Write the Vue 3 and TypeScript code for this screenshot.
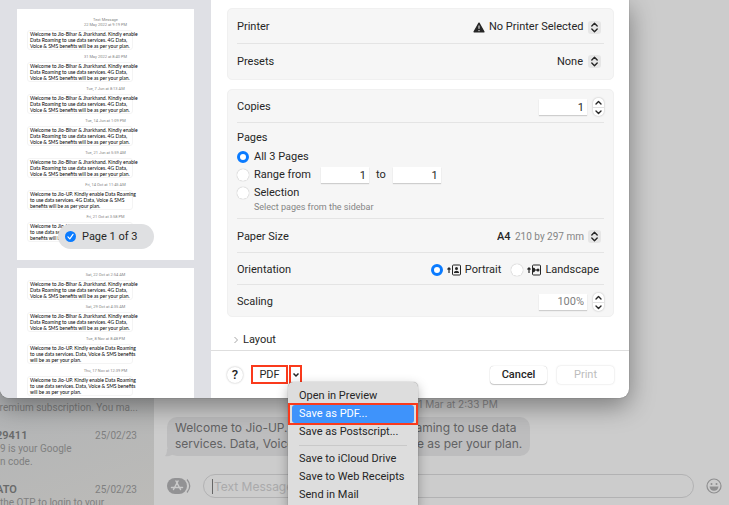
<script setup lang="ts">
import { ref } from 'vue'

interface Note {
  stamp: string
  body: string
}

const bihar = 'Welcome to Jio-Bihar & Jharkhand. Kindly enable\nData Roaming to use data services. 4G Data,\nVoice & SMS benefits will be as per your plan.'
const upRoaming = 'Welcome to Jio-UP. Kindly enable Data Roaming\nto use data services. 4G Data, Voice & SMS\nbenefits will be as per your plan.'
const upData = 'Welcome to Jio-UP. Kindly enable Data Roaming\nto use data services. Data, Voice & SMS benefits\nwill be as per your plan.'

const firstPage: Note[] = [
  { stamp: '22 May 2022 at 9:19 PM', body: bihar },
  { stamp: '31 May 2022 at 8:40 PM', body: bihar },
  { stamp: 'Tue, 7 Jun at 8:13 AM', body: bihar },
  { stamp: 'Tue, 14 Jun at 1:09 PM', body: bihar },
  { stamp: 'Tue, 21 Jun at 5:59 AM', body: bihar },
  { stamp: 'Fri, 14 Oct at 11:45 AM', body: upRoaming },
  { stamp: 'Fri, 21 Oct at 3:58 PM', body: upRoaming },
]
const secondPage: Note[] = [
  { stamp: 'Sat, 22 Oct at 2:54 AM', body: bihar },
  { stamp: 'Sat, 29 Oct at 4:35 AM', body: bihar },
  { stamp: 'Tue, 8 Nov at 8:48 PM', body: upData },
  { stamp: 'Thu, 17 Nov at 12:39 PM', body: upData },
]

const includePage = ref(true)
const copies = ref('1')
const from = ref('1')
const to = ref('1')
const scaling = ref('100%')
const range = ref('all')
const orientation = ref('portrait')
</script>

<template>
  <div class="stage">
    <div class="messages">
      <aside class="threads">
        <article class="thread">
          <p>premium subscription. You ma...</p>
        </article>
        <article class="thread">
          <header><b>29411</b><time>25/02/23</time></header>
          <p>9 is your Google<br />n code.</p>
        </article>
        <article class="thread">
          <header><b>ATO</b><time>25/02/23</time></header>
          <p>the OTP to login to your</p>
        </article>
      </aside>
      <main class="chat">
        <time class="chat-time">Wed, 1 Mar at 2:33 PM</time>
        <p class="bubble">
          Welcome to Jio-UP. Kindly enable Data Roaming to use data<br />services. Data, Voice &amp; SMS benefits will be as per your plan.
          <svg class="tail" width="10" height="8" viewBox="0 0 10 8"><path d="M2 0C2 4 1 6 0 7C4 8 7 6 10 4V0Z" fill="#bdbdbe" /></svg>
        </p>
        <form class="composer">
          <button type="button" class="plain" aria-label="Apps">
            <svg width="24" height="16" viewBox="0 0 24 16">
              <rect x="0" y="0" width="20" height="16" rx="8" fill="#929294" />
              <path d="M20 1.500Q25.500 8 20 14.500" fill="none" stroke="#929294" stroke-width="1.200" />
              <path d="M11 3L6.500 11.500M9 3L13.500 11.500M4.500 9.500H15.500" fill="none" stroke="#cacaca" stroke-width="1.500" stroke-linecap="round" />
            </svg>
          </button>
          <input class="compose-field" type="text" placeholder="Text Message" aria-label="Text Message" />
          <button type="button" class="plain" aria-label="Emoji">
            <svg width="16" height="16" viewBox="0 0 16 16">
              <circle cx="8" cy="8" r="7" fill="none" stroke="#8f8f90" stroke-width="1.200" />
              <circle cx="5.500" cy="6" r="1" fill="#8f8f90" /><circle cx="10.500" cy="6" r="1" fill="#8f8f90" />
              <path d="M3.500 8.500H12.500Q12 12.700 8 12.700T3.500 8.500Z" fill="#8f8f90" />
            </svg>
          </button>
        </form>
      </main>
    </div>

    <section class="dialog" role="dialog" aria-label="Printer">
      <aside class="preview">
        <div class="sheet sheet-first">
          <p class="stamp">Text Message</p>
          <template v-for="(n, i) in firstPage" :key="n.stamp">
            <p class="stamp" :class="{ gap: i > 0 }">{{ n.stamp }}</p>
            <p class="note">{{ n.body }}</p>
          </template>
          <label class="page-pill">
            <input v-model="includePage" type="checkbox" />
            <svg width="11" height="11" viewBox="0 0 11 11"><circle cx="5.500" cy="5.500" r="5.500" fill="#0a7bff" /><path d="M3 5.800L4.800 7.800L8 3.300" fill="none" stroke="#fff" stroke-width="1.200" stroke-linecap="round" stroke-linejoin="round" /></svg>
            Page 1 of 3
          </label>
        </div>
        <div class="sheet">
          <template v-for="n in secondPage" :key="n.stamp">
            <p class="stamp gap">{{ n.stamp }}</p>
            <p class="note">{{ n.body }}</p>
          </template>
        </div>
      </aside>

      <form class="settings" @submit.prevent>
        <div class="options">
          <div class="card">
            <div class="row">
              <label for="printer">Printer</label>
              <span class="pick">
                <svg width="12" height="11" viewBox="0 0 12 11"><path d="M6 1.200L10.900 9.800H1.100Z" fill="#262626" stroke="#262626" stroke-width="1.400" stroke-linejoin="round" /><path d="M6 3.500V6.800M6 8V9.200" stroke="#f6f6f6" stroke-width="1" /></svg>
                <select id="printer"><option>No Printer Selected</option></select>
                <svg class="updown" viewBox="0 0 13 13"><path d="M3.800 5L6.500 2.300L9.200 5M3.800 8L6.500 10.700L9.200 8" /></svg>
              </span>
            </div>
            <div class="row">
              <label for="presets">Presets</label>
              <span class="pick">
                <select id="presets"><option>None</option></select>
                <svg class="updown" viewBox="0 0 13 13"><path d="M3.800 5L6.500 2.300L9.200 5M3.800 8L6.500 10.700L9.200 8" /></svg>
              </span>
            </div>
          </div>

          <div class="card">
            <div class="row low">
              <label for="copies">Copies</label>
              <span class="stepped">
                <input id="copies" v-model="copies" class="field" type="text" />
                <span class="stepper">
                  <button type="button" aria-label="More copies"><svg viewBox="0 0 11 9"><path d="M3 6L5.500 3.500L8 6" /></svg></button>
                  <button type="button" aria-label="Fewer copies"><svg viewBox="0 0 11 9"><path d="M3 3L5.500 5.500L8 3" /></svg></button>
                </span>
              </span>
            </div>
            <fieldset class="pages">
              <legend>Pages</legend>
              <label class="choice"><input v-model="range" type="radio" name="range" value="all" />All 3 Pages</label>
              <div class="choice">
                <input id="r-from" v-model="range" type="radio" name="range" value="from" />
                <label for="r-from">Range from</label>
                <input v-model="from" class="field" type="text" aria-label="First page" />
                <label for="to">to</label>
                <input id="to" v-model="to" class="field" type="text" />
              </div>
              <label class="choice"><input v-model="range" type="radio" name="range" value="selection" />Selection</label>
              <p class="hint">Select pages from the sidebar</p>
            </fieldset>
            <div class="row">
              <label for="paper">Paper Size</label>
              <span class="pick">
                <select id="paper" class="paper"><option>A4</option></select>
                <span class="dims">210 by 297 mm</span>
                <svg class="updown" viewBox="0 0 13 13"><path d="M3.800 5L6.500 2.300L9.200 5M3.800 8L6.500 10.700L9.200 8" /></svg>
              </span>
            </div>
            <div class="row low">
              <span>Orientation</span>
              <span class="orient">
                <label><input v-model="orientation" type="radio" name="orientation" value="portrait" />
                  <svg width="14" height="12" viewBox="0 0 14 12"><path d="M2 9V4M0.500 5.500L2 3.800L3.500 5.500" fill="none" stroke="#262626" stroke-width="1.200" /><rect x="5.500" y="1" width="8" height="10" rx="1" fill="none" stroke="#262626" /><circle cx="9.500" cy="4.500" r="1.500" fill="#262626" /><path d="M7 9V8.300Q7.300 6.800 9.500 6.800T12 8.300V9Z" fill="#262626" /></svg>
                  Portrait</label>
                <label><input v-model="orientation" type="radio" name="orientation" value="landscape" />
                  <svg width="14" height="12" viewBox="0 0 14 12"><path d="M2 9V4M0.500 5.500L2 3.800L3.500 5.500" fill="none" stroke="#262626" stroke-width="1.200" /><rect x="5.500" y="1" width="8" height="10" rx="1" fill="none" stroke="#262626" /><circle cx="11" cy="6" r="1.500" fill="#262626" /><path d="M6 3.800H7Q8 4 8.300 5.400H10V6.600H8.300Q8 8 7 8.200H6Z" fill="#262626" /></svg>
                  Landscape</label>
              </span>
            </div>
            <div class="row low">
              <label for="scaling">Scaling</label>
              <span class="stepped">
                <input id="scaling" v-model="scaling" class="field muted" type="text" />
                <span class="stepper">
                  <button type="button" aria-label="Larger"><svg viewBox="0 0 11 9"><path d="M3 6L5.500 3.500L8 6" /></svg></button>
                  <button type="button" aria-label="Smaller"><svg viewBox="0 0 11 9"><path d="M3 3L5.500 5.500L8 3" /></svg></button>
                </span>
              </span>
            </div>
          </div>

          <button type="button" class="plain disclosure">
            <svg width="6" height="8" viewBox="0 0 6 8"><path d="M1.500 1L4.500 4L1.500 7" fill="none" stroke="#a6a6a6" /></svg>
            Layout
          </button>
        </div>

        <footer class="actions">
          <button type="button" class="help" aria-label="Help">?</button>
          <div class="pdf">
            <button type="button" class="marked pdf-main">PDF</button>
            <div class="pdf-more">
              <button type="button" class="marked arrow" aria-label="PDF options">
                <svg width="8" height="6" viewBox="0 0 8 6"><path d="M1.500 1.500L4 4L6.500 1.500" fill="none" stroke="#262626" stroke-width="1.500" /></svg>
              </button>
              <ul class="menu">
                <li><button type="button">Open in Preview</button></li>
                <li class="current"><button type="button">Save as PDF...</button></li>
                <li><button type="button">Save as Postscript...</button></li>
                <li class="rule"></li>
                <li><button type="button">Save to iCloud Drive</button></li>
                <li><button type="button">Save to Web Receipts</button></li>
                <li><button type="button">Send in Mail</button></li>
              </ul>
            </div>
          </div>
          <button type="button" class="push">Cancel</button>
          <button type="submit" class="push" disabled>Print</button>
        </footer>
      </form>
    </section>
  </div>
</template>

<style>
body {
  background: #cccccc;
}
</style>

<style scoped>
.stage {
  position: relative;
  min-height: 100vh;
  overflow: hidden;
  font: 11px/14px Inter, "Liberation Sans", sans-serif;
  color: #262626;
}
.stage * {
  box-sizing: border-box;
}
p, ul {
  margin: 0;
  padding: 0;
}
button, input, select {
  margin: 0;
  padding: 0;
  border: 0;
  font: inherit;
  color: inherit;
  outline: none;
}
button {
  background: none;
}
svg {
  flex: none;
  display: block;
}

/* Messages window behind the dialog */
.messages {
  display: grid;
  grid-template-columns: 154px 1fr;
  height: 100vh;
  background: #cccccc;
}
.threads {
  display: flex;
  flex-direction: column;
  justify-content: flex-end;
  gap: 15px;
  min-height: 0;
  margin-bottom: -4px;
  padding-right: 17px;
  background: linear-gradient(160deg, #b2b4b6 70%, #bcbbb8);
  color: #7f8080;
  font-family: Roboto, "Liberation Sans", sans-serif;
  font-size: 10px;
  line-height: 13px;
  white-space: nowrap;
}
.thread p {
  margin-left: -6px;
}
.thread header + p {
  margin-left: 0;
}
.thread header {
  display: flex;
  justify-content: space-between;
}
.thread b {
  margin-left: -4px;
  color: #696a6a;
  font-size: 11px;
  font-weight: 600;
}
.chat {
  display: flex;
  flex-direction: column;
  justify-content: flex-end;
  min-width: 0;
  padding: 0 7px 7px 13px;
}
.chat-time {
  align-self: center;
  margin-bottom: 6px;
  color: #8b8b8c;
  font-size: 10px;
}
.bubble {
  position: relative;
  align-self: flex-start;
  margin-bottom: 18px;
  padding: 3px 8px 4px;
  border-radius: 10px;
  background: #bdbdbe;
  color: #626263;
  font-size: 12px;
  line-height: 16px;
  white-space: nowrap;
}
.tail {
  position: absolute;
  left: -2px;
  bottom: -1px;
}
.composer {
  display: flex;
  align-items: center;
  gap: 12px;
}
.compose-field {
  flex: 1;
  height: 24px;
  min-width: 0;
  padding: 0 10px;
  border: 1px solid #b2b2b3;
  border-radius: 12px;
  background: linear-gradient(#666666, #666666) 8px center / 1px 15px no-repeat;
  font-size: 12px;
}
.compose-field::placeholder {
  color: #aaaaab;
}

/* Print dialog */
.dialog {
  position: absolute;
  top: 0;
  left: 0;
  right: 100px;
  display: grid;
  grid-template-columns: 211px 1fr;
  border-radius: 0 0 9px 9px;
  background: #ffffff;
  box-shadow: 0 8px 26px rgba(0, 0, 0, 0.4), 0 0 1px rgba(0, 0, 0, 0.5);
  font-family: Roboto, "Liberation Sans", sans-serif;
}
.preview {
  display: flex;
  flex-direction: column;
  gap: 8px;
  height: 0;
  min-height: 100%;
  padding: 9px 17px 0;
  overflow: hidden;
  border-radius: 0 0 0 9px;
  background: #dfe0e5;
}
.sheet {
  flex: none;
  padding: 0 10px 4px;
  background: #ffffff;
}
.sheet-first {
  position: relative;
  padding: 8px 10px 18px;
}
.stamp {
  color: #858585;
  font-size: 4px;
  line-height: 5px;
  text-align: center;
}
.stamp.gap {
  padding: 4px 0 3px;
}
.sheet-first .stamp:nth-child(2) {
  padding-bottom: 3px;
}
.note {
  width: 106px;
  padding: 0 2px;
  border: 1px solid #f4f4f4;
  border-radius: 3px;
  font-family: Lato, "Liberation Sans", sans-serif;
  font-size: 5px;
  line-height: 6px;
  color: #000000;
  white-space: pre;
}
.page-pill {
  position: absolute;
  left: 41px;
  bottom: 11px;
  display: flex;
  align-items: center;
  gap: 6px;
  height: 25px;
  padding: 0 16px 0 7px;
  border-radius: 13px;
  background: #dfe0e2;
  white-space: nowrap;
}
.page-pill input {
  position: absolute;
  opacity: 0;
}
.settings {
  min-width: 0;
}
.options {
  padding: 8px 15px 0 16px;
}
.card {
  margin-bottom: 9px;
  padding: 0 9px 2px;
  border: 1px solid #f0f0f0;
  border-radius: 5px;
  background: #f6f6f6;
}
.card + .card {
  margin-bottom: 12px;
  padding-bottom: 0;
}
.row {
  display: flex;
  align-items: center;
  justify-content: space-between;
  height: 34px;
  padding-top: 2px;
}
.row.low {
  height: 32px;
}
.row + .row,
.pages,
.pages + .row {
  border-top: 1px solid #e4e4e4;
}
.pick {
  display: flex;
  align-items: center;
  gap: 4px;
  padding-right: 3px;
}
select {
  appearance: none;
  background: none;
}
.updown {
  width: 13px;
  height: 13px;
  border-radius: 3px;
  background: #e6e6e6;
}
.updown path,
.stepper path {
  fill: none;
  stroke: #262626;
  stroke-width: 1.4;
  stroke-linecap: round;
  stroke-linejoin: round;
}
.dims {
  color: #858585;
  font-size: 10px;
}
.paper {
  font-weight: 500;
}
.stepped {
  display: flex;
  align-items: center;
  gap: 6px;
}
.field {
  width: 48px;
  height: 16px;
  padding: 0 3px;
  background: #ffffff;
  box-shadow: 0 1px 1px rgba(0, 0, 0, 0.16);
  text-align: right;
}
.field.muted {
  color: #808080;
}
.stepper {
  display: grid;
  width: 11px;
  border-radius: 5px;
  background: #ffffff;
  box-shadow: 0 0 2px rgba(0, 0, 0, 0.28);
}
.stepper button {
  width: 11px;
  height: 9px;
}
.stepper button + button {
  border-top: 1px solid #e2e2e2;
}
.pages {
  margin: 0;
  padding: 8px 0 6px;
  border-width: 1px 0 0;
  min-width: 0;
}
.pages legend {
  float: left;
  width: 100%;
  padding: 0;
}
.choice {
  display: flex;
  align-items: center;
  gap: 5px;
  height: 18px;
  clear: both;
}
.pages legend + .choice {
  padding-top: 3px;
  height: 21px;
}
.choice .field {
  margin: 0 2px 0 5px;
}
.choice label + .field + label + .field {
  margin-left: 2px;
}
input[type="radio"] {
  appearance: none;
  width: 12px;
  height: 12px;
  border-radius: 50%;
  background: #ffffff;
  box-shadow: 0 0 1px rgba(0, 0, 0, 0.4);
}
input[type="radio"]:checked {
  border: 3px solid #0a7bff;
  box-shadow: none;
}
.hint {
  padding-left: 17px;
  color: #858585;
  font-size: 9px;
  line-height: 10px;
}
.orient {
  display: flex;
  gap: 10px;
  padding-right: 5px;
}
.orient label {
  display: flex;
  align-items: center;
  gap: 4px;
}
.disclosure {
  display: flex;
  align-items: center;
  gap: 4px;
  height: 21px;
  padding-left: 6px;
}
.actions {
  display: flex;
  align-items: center;
  gap: 10px;
  height: 48px;
  padding: 0 15px 0 16px;
  border-top: 1px solid #dedede;
}
.help {
  width: 16px;
  height: 16px;
  border-radius: 50%;
  box-shadow: 0 0 2px rgba(0, 0, 0, 0.3);
  font-size: 13px;
  font-weight: 500;
  line-height: 16px;
}
.pdf {
  display: flex;
  gap: 1px;
  margin: 0 auto 0 -2px;
}
.pdf-more {
  position: relative;
}
.marked {
  display: block;
  height: 19px;
  border: 2px solid #fa3a1c;
}
.pdf-main {
  width: 37px;
}
.arrow {
  width: 13px;
  padding-left: 1px;
}
.menu {
  position: absolute;
  top: 17px;
  left: -1px;
  z-index: 1;
  width: 130px;
  padding: 5px 4px;
  border-radius: 5px;
  background: #dddddd;
  box-shadow: 0 0 1px rgba(0, 0, 0, 0.5), 0 4px 12px rgba(0, 0, 0, 0.3);
  list-style: none;
}
.menu button {
  display: block;
  width: 100%;
  height: 18px;
  padding-left: 7px;
  border-radius: 3px;
  text-align: left;
  white-space: nowrap;
}
.menu .current {
  margin: -2px -4px;
  padding: 0 2px;
  border: 2px solid #fa3a1c;
}
.current button {
  background: #3e93fb;
  color: #ffffff;
}
.rule {
  height: 1px;
  margin: 4px 7px;
  background: #c9c9c9;
}
.push {
  width: 57px;
  height: 18px;
  border-radius: 4px;
  background: #ffffff;
  box-shadow: 0 0 1px rgba(0, 0, 0, 0.3), 0 1px 1px rgba(0, 0, 0, 0.2);
  font-weight: 500;
}
.push:disabled {
  color: #bdbdbd;
  font-weight: 400;
  box-shadow: 0 0 2px rgba(0, 0, 0, 0.18);
}
.plain {
  text-align: left;
}
</style>
